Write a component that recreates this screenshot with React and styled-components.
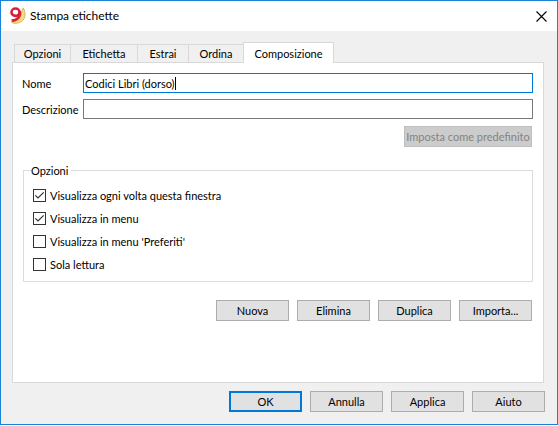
import React, { useState } from "react";
import styled, { createGlobalStyle } from "styled-components";

const GlobalStyle = createGlobalStyle`
  *, *::before, *::after { box-sizing: border-box; }
  html, body, #root { height: 100%; }
  body {
    margin: 0;
    background: #fff;
    color: #000;
    font-family: Lato, sans-serif;
    font-size: 11px;
    line-height: 15px;
  }
  button, input { font: inherit; color: inherit; }
`;

const Window = styled.main`
  display: flex;
  flex-direction: column;
  min-height: calc(100% - 1px);
  background: #f0f0f0;
  border: 1px solid #1883d7;
`;

const TitleBar = styled.header`
  display: flex;
  align-items: center;
  gap: 4px;
  height: 30px;
  padding: 0 10px 0 8px;
  background: #fff;
`;

const Title = styled.h1`
  flex: 1;
  margin: 0;
  font-size: 12px;
  font-weight: 400;
  line-height: 16px;
`;

const CloseButton = styled.button`
  display: flex;
  padding: 0;
  border: 0;
  background: none;
`;

const Tabs = styled.nav`
  display: flex;
  align-items: flex-end;
  margin: 11px 13px 0 13px;
`;

const Tab = styled.button`
  height: ${(p) => (p.$active ? 21 : 18)}px;
  width: ${(p) => p.$width}px;
  margin-bottom: ${(p) => (p.$active ? -1 : 0)}px;
  padding: 0;
  border: 1px solid #d9d9d9;
  border-bottom: 0;
  border-right-width: ${(p) => (p.$active ? 1 : 0)}px;
  background: ${(p) => (p.$active ? "#fff" : "#f0f0f0")};
  z-index: ${(p) => (p.$active ? 1 : 0)};
`;

const Panel = styled.section`
  flex: 1;
  margin: 0 13px 0 11px;
  padding: 10px 10px 0 9px;
  background: #fff;
  border: 1px solid #d9d9d9;
`;

const Fields = styled.div`
  display: grid;
  grid-template-columns: 61px 1fr;
  row-gap: 6px;
  align-items: center;
`;

const InputFrame = styled.div`
  position: relative;
  display: flex;
`;

const Caret = styled.span`
  position: absolute;
  top: 4px;
  left: 92px;
  width: 1px;
  height: 13px;
  background: #000;
  pointer-events: none;
`;

const TextInput = styled.input`
  width: 100%;
  height: 20px;
  padding: 1px 1px 0;
  border: 1px solid #7a7a7a;
  background: #fff;
  outline: 0;
  &:focus { border-color: #0078d7; }
`;

const Buttons = styled.div`
  display: flex;
  justify-content: flex-end;
  gap: 8px;
  margin-top: ${(p) => p.$top}px;
  padding-right: 1px;
`;

const Button = styled.button`
  height: 21px;
  width: ${(p) => (p.$wide ? 128 : 73)}px;
  padding: 0;
  border: ${(p) => (p.$primary ? "2px solid #0078d7" : "1px solid #adadad")};
  background: #e1e1e1;
  white-space: nowrap;
  &:disabled {
    color: #838383;
    background: #ccc;
    border-color: #bfbfbf;
  }
`;

const Group = styled.fieldset`
  display: grid;
  gap: 8px;
  margin: 16px 0 0 1px;
  padding: 10px 9px 9px;
  border: 1px solid #dcdcdc;
`;

const Legend = styled.legend`
  margin-left: -2px;
  padding: 0 3px 0 0;
`;

const CheckLabel = styled.label`
  display: flex;
  align-items: center;
  gap: 4px;
`;

const CheckBox = styled.span`
  display: grid;
  width: 13px;
  height: 13px;
  > * { grid-area: 1 / 1; }
  svg { pointer-events: none; visibility: hidden; }
  input:checked + svg { visibility: visible; }
`;

const CheckInput = styled.input`
  appearance: none;
  width: 13px;
  height: 13px;
  margin: 0;
  border: 1px solid #333;
  background: #fff;
`;

const Footer = styled.footer`
  padding: 0 11px 12px;
`;

const tabs = [
  ["Opzioni", 56],
  ["Etichetta", 67],
  ["Estrai", 51],
  ["Ordina", 55],
  ["Composizione", 91],
];

function Logo() {
  return (
    <svg width="17" height="18" viewBox="0 0 17 18" aria-hidden="true">
      <path d="M14.2 1C17.6 6 16.4 13.4 10.6 15.6C7.4 16.8 4 16.6 2.6 15.2C8.6 14.2 12.4 10 12.8 4.4Z" fill="#f3e07a" stroke="#c9a046" strokeWidth=".7" />
      <ellipse cx="6.5" cy="5.2" rx="4" ry="3.7" fill="#fff" stroke="#d81e3a" strokeWidth="2.6" />
      <path d="M10.7 4.2C11.8 9.4 8.6 13.4 2.6 13.5" fill="none" stroke="#d81e3a" strokeWidth="2.7" />
    </svg>
  );
}

function Check({ label, checked }) {
  return (
    <CheckLabel>
      <CheckBox>
        <CheckInput type="checkbox" defaultChecked={checked} />
        <svg width="13" height="13" viewBox="0 0 13 13" aria-hidden="true">
          <path d="M2.3 6.3L5 9L10.7 3.3" fill="none" stroke="#333" strokeWidth="1.2" />
        </svg>
      </CheckBox>
      {label}
    </CheckLabel>
  );
}

export default function App() {
  const [active, setActive] = useState("Composizione");
  const [showCaret, setShowCaret] = useState(true);

  return (
    <>
      <GlobalStyle />
      <Window>
        <TitleBar>
          <Logo />
          <Title>Stampa etichette</Title>
          <CloseButton type="button" aria-label="Chiudi">
            <svg width="11" height="11" viewBox="0 0 11 11" aria-hidden="true">
              <path d="M.5 .5L10.5 10.5M10.5 .5L.5 10.5" stroke="#000" strokeWidth="1.1" />
            </svg>
          </CloseButton>
        </TitleBar>
        <Tabs>
          {tabs.map(([name, width]) => (
            <Tab key={name} type="button" $width={width} $active={name === active} onClick={() => setActive(name)}>
              {name}
            </Tab>
          ))}
        </Tabs>
        <Panel>
          <Fields>
            <label htmlFor="name">Nome</label>
            <InputFrame>
              <TextInput
                id="name"
                autoFocus
                defaultValue="Codici Libri (dorso)"
                onChange={() => setShowCaret(false)}
                onBlur={() => setShowCaret(false)}
              />
              {showCaret && <Caret />}
            </InputFrame>
            <label htmlFor="description">Descrizione</label>
            <TextInput id="description" />
          </Fields>
          <Buttons $top={7}>
            <Button type="button" $wide disabled>Imposta come predefinito</Button>
          </Buttons>
          <Group>
            <Legend>Opzioni</Legend>
            <Check label="Visualizza ogni volta questa finestra" checked />
            <Check label="Visualizza in menu" checked />
            <Check label="Visualizza in menu 'Preferiti'" />
            <Check label="Sola lettura" />
          </Group>
          <Buttons $top={18}>
            <Button type="button">Nuova</Button>
            <Button type="button">Elimina</Button>
            <Button type="button">Duplica</Button>
            <Button type="button">Importa...</Button>
          </Buttons>
        </Panel>
        <Footer>
          <Buttons $top={8}>
            <Button type="button" $primary>OK</Button>
            <Button type="button">Annulla</Button>
            <Button type="button">Applica</Button>
            <Button type="button">Aiuto</Button>
          </Buttons>
        </Footer>
      </Window>
    </>
  );
}
